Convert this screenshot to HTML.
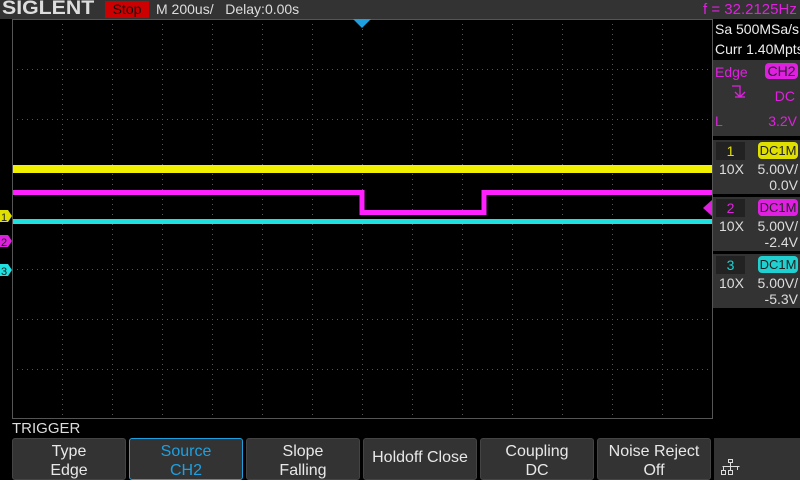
<!DOCTYPE html>
<html><head><meta charset="utf-8"><style>
*{margin:0;padding:0;box-sizing:border-box}
body{width:800px;height:480px;background:#000;overflow:hidden;position:relative;font-family:"Liberation Sans",sans-serif;color:#e0e0e0}
.a{position:absolute}
.btn{position:absolute;top:438px;height:42px;background:#333;border:1px solid #444;border-radius:3px;font-size:16px;text-align:center;line-height:19px;padding-top:3px;color:#e8e8e8}
.arr{position:absolute;right:6px;top:12px;width:0;height:0}
.cb{position:absolute;left:713px;width:87px;height:54px;background:#333;font-size:14px;color:#ddd}
</style></head><body>
<div class="a" style="left:0;top:0;width:800px;height:19px;background:#333"></div>
<div class="a" style="left:2px;top:-1px;font-size:19px;font-weight:bold;color:#ddd;line-height:20px;transform:scaleX(1.12);transform-origin:left">SIGLENT</div>
<div class="a" style="left:105px;top:1px;width:44px;height:17px;background:#c00;color:#111;font-size:14px;line-height:17px;text-align:center">Stop</div>
<div class="a" style="left:156px;top:1px;font-size:14px;line-height:17px;color:#ddd">M 200us/&nbsp;&nbsp; Delay:0.00s</div>
<div class="a" style="left:703px;top:1px;font-size:15px;line-height:17px;color:#e020e0">f = 32.2125Hz</div>
<div class="a" style="left:713px;top:19px;width:87px;height:41px;background:#000;font-size:14px;line-height:20px;color:#eee;padding-left:2px;white-space:nowrap">Sa 500MSa/s<br>Curr 1.40Mpts</div>
<div class="a" style="left:713px;top:60px;width:87px;height:76px;background:#333;font-size:14px;color:#e020e0">
<div class="a" style="left:2px;top:4px">Edge</div>
<div class="a" style="left:52px;top:3px;width:33px;height:16px;background:#e020e0;color:#222;border-radius:4px;text-align:center;line-height:16px">CH2</div>
<svg class="a" style="left:17px;top:24px" width="18" height="16"><path d="M2 2H10V12M5 8L10 13L15 8M5 13H15" stroke="#e020e0" stroke-width="1.3" fill="none"/></svg>
<div class="a" style="right:5px;top:28px">DC</div>
<div class="a" style="left:2px;top:53px">L</div>
<div class="a" style="right:3px;top:53px">3.2V</div>
</div>
<div class="cb" style="top:140px">
<div class="a" style="left:3px;top:2px;width:29px;height:18px;background:#222;color:#e0e000;text-align:center;line-height:18px">1</div>
<div class="a" style="left:45px;top:2px;width:40px;height:17px;background:#e0e000;color:#222;border-radius:4px;text-align:center;line-height:17px;font-size:13px">DC1M</div>
<div class="a" style="left:6px;top:21px">10X</div><div class="a" style="right:2px;top:21px">5.00V/</div><div class="a" style="right:2px;top:37px">0.0V</div></div>
<div class="cb" style="top:197px">
<div class="a" style="left:3px;top:2px;width:29px;height:18px;background:#222;color:#e020e0;text-align:center;line-height:18px">2</div>
<div class="a" style="left:45px;top:2px;width:40px;height:17px;background:#e020e0;color:#222;border-radius:4px;text-align:center;line-height:17px;font-size:13px">DC1M</div>
<div class="a" style="left:6px;top:21px">10X</div><div class="a" style="right:2px;top:21px">5.00V/</div><div class="a" style="right:2px;top:37px">-2.4V</div></div>
<div class="cb" style="top:254px">
<div class="a" style="left:3px;top:2px;width:29px;height:18px;background:#222;color:#20d0d0;text-align:center;line-height:18px">3</div>
<div class="a" style="left:45px;top:2px;width:40px;height:17px;background:#20d0d0;color:#222;border-radius:4px;text-align:center;line-height:17px;font-size:13px">DC1M</div>
<div class="a" style="left:6px;top:21px">10X</div><div class="a" style="right:2px;top:21px">5.00V/</div><div class="a" style="right:2px;top:37px">-5.3V</div></div>
<svg class="a" style="left:0;top:0" width="800" height="440">
<g stroke="#555" stroke-width="1" stroke-dasharray="1,4">
<line x1="62.5" y1="19" x2="62.5" y2="418"/><line x1="112.5" y1="19" x2="112.5" y2="418"/><line x1="162.5" y1="19" x2="162.5" y2="418"/><line x1="212.5" y1="19" x2="212.5" y2="418"/><line x1="262.5" y1="19" x2="262.5" y2="418"/><line x1="312.5" y1="19" x2="312.5" y2="418"/><line x1="362.5" y1="19" x2="362.5" y2="418"/><line x1="412.5" y1="19" x2="412.5" y2="418"/><line x1="462.5" y1="19" x2="462.5" y2="418"/><line x1="512.5" y1="19" x2="512.5" y2="418"/><line x1="562.5" y1="19" x2="562.5" y2="418"/><line x1="612.5" y1="19" x2="612.5" y2="418"/><line x1="662.5" y1="19" x2="662.5" y2="418"/>
<line x1="12" y1="69.5" x2="712" y2="69.5"/><line x1="12" y1="119.5" x2="712" y2="119.5"/><line x1="12" y1="169.5" x2="712" y2="169.5"/><line x1="12" y1="219.5" x2="712" y2="219.5"/><line x1="12" y1="269.5" x2="712" y2="269.5"/><line x1="12" y1="319.5" x2="712" y2="319.5"/><line x1="12" y1="369.5" x2="712" y2="369.5"/>
</g>
<rect x="12.5" y="19.5" width="700" height="399" fill="none" stroke="#555"/>
<polygon points="353,19 371,19 362,28" fill="#1ea0e0"/>
<rect x="13" y="165" width="699" height="8" fill="#f0f000"/>
<path d="M13 192.5H362V212.5H484V192.5H712" stroke="#ff20ff" stroke-width="5" fill="none"/>
<rect x="13" y="219" width="699" height="5" fill="#20e0e0"/>
<polygon points="0,210 8,210 12,216 8,222 0,222" fill="#e0e000"/><text x="1" y="221" font-size="11" fill="#222" font-family="Liberation Sans">1</text>
<polygon points="0,235 8,235 12,241 8,247 0,247" fill="#e020e0"/><text x="1" y="246" font-size="11" fill="#222" font-family="Liberation Sans">2</text>
<polygon points="0,264 8,264 12,270 8,276 0,276" fill="#20e0e0"/><text x="1" y="275" font-size="11" fill="#222" font-family="Liberation Sans">3</text>
<polygon points="703,208 712,200 712,216" fill="#e020e0"/>
</svg>
<div class="a" style="left:12px;top:420px;font-size:15px;color:#ddd">TRIGGER</div>
<div class="btn" style="left:12px;width:114px">Type<br>Edge<svg class="arr" width="12" height="10" style="top:12px"><path d="M0 6L6 0L12 6H8V10H4V6Z" fill="#1ea0e0"/></svg></div>
<div class="btn" style="left:129px;width:114px;border-color:#1ea0e0;color:#1ea0e0">Source<br>CH2<svg class="arr" width="12" height="10" style="top:12px"><path d="M0 6L6 0L12 6H8V10H4V6Z" fill="#1ea0e0"/></svg></div>
<div class="btn" style="left:246px;width:114px">Slope<br>Falling<svg class="arr" width="12" height="10" style="top:12px"><path d="M0 6L6 0L12 6H8V10H4V6Z" fill="#1ea0e0"/></svg></div>
<div class="btn" style="left:363px;width:114px;line-height:38px;padding-top:0">Holdoff Close</div>
<div class="btn" style="left:480px;width:114px">Coupling<br>DC<svg class="arr" width="12" height="10" style="top:12px"><path d="M0 6L6 0L12 6H8V10H4V6Z" fill="#1ea0e0"/></svg></div>
<div class="btn" style="left:597px;width:114px">Noise Reject<br>Off</div>
<div class="a" style="left:714px;top:438px;width:86px;height:42px;background:#333"></div>
<svg class="a" style="left:720px;top:459px" width="22" height="18"><g stroke="#ddd" fill="none" stroke-width="1"><rect x="8.5" y="0.5" width="4" height="3"/><path d="M10.5 4V7M2.5 7.5H19.5M3.5 7V11M17.5 7V11M10.5 7V11"/><rect x="1.5" y="11.5" width="4" height="4"/><rect x="8.5" y="11.5" width="4" height="4"/></g></svg>
</body></html>
